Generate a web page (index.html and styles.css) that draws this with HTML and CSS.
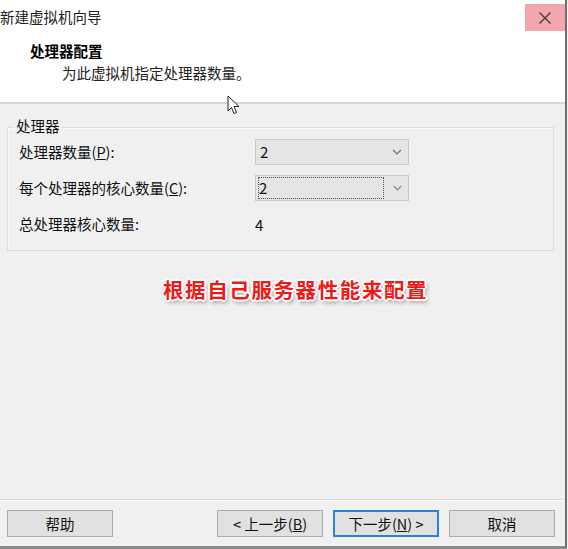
FILE: index.html
```html
<!DOCTYPE html>
<html lang="zh">
<head>
<meta charset="utf-8">
<title>新建虚拟机向导</title>
<link rel="stylesheet" href="styles.css">
</head>
<body>
<div class="window">
  <div class="header">
    <div class="titlebar">
      <span class="title">新建虚拟机向导</span>
      <div class="close">
        <svg width="14" height="14" viewBox="0 0 14 14"><path d="M1.5 1.5 L12.5 12.5 M12.5 1.5 L1.5 12.5" stroke="#3a3a3a" stroke-width="1.3" fill="none"/></svg>
      </div>
    </div>
    <div class="heading">处理器配置</div>
    <div class="subheading">为此虚拟机指定处理器数量。</div>
    <svg class="cursor" width="14" height="20" viewBox="0 0 14 20"><path d="M1 1 L1 16 L4.5 12.5 L7 18.5 L9.5 17.5 L7 11.5 L12 11.5 Z" fill="#fff" stroke="#222" stroke-width="1"/></svg>
  </div>
  <div class="body">
    <div class="group">
      <span class="legend">处理器</span>
      <div class="row">
        <span class="label">处理器数量(<u>P</u>):</span>
        <div class="combo"><span class="val">2</span><svg class="chev" width="10" height="6" viewBox="0 0 10 6"><path d="M1 1 L5 5 L9 1" stroke="#707070" stroke-width="1.2" fill="none"/></svg></div>
      </div>
      <div class="row">
        <span class="label">每个处理器的核心数量(<u>C</u>):</span>
        <div class="combo"><span class="val focus">2</span><svg class="chev" width="10" height="6" viewBox="0 0 10 6"><path d="M1 1 L5 5 L9 1" stroke="#707070" stroke-width="1.2" fill="none"/></svg></div>
      </div>
      <div class="row">
        <span class="label">总处理器核心数量:</span>
        <span class="num">4</span>
      </div>
    </div>
    <div class="note">根据自己服务器性能来配置</div>
  </div>
  <div class="footer">
    <button class="btn help">帮助</button>
    <div class="spacer"></div>
    <button class="btn">&lt; 上一步(<u>B</u>)</button>
    <button class="btn primary">下一步(<u>N</u>) &gt;</button>
    <button class="btn">取消</button>
  </div>
</div>
</body>
</html>
```
FILE: styles.css
```css
html, body {
  margin: 0;
  padding: 0;
  background: #f0f0f0;
}
body {
  width: 568px;
  height: 549px;
  overflow: hidden;
  font-family: "Noto Sans CJK SC", "Noto Sans", sans-serif;
  font-size: 14.5px;
  color: #111;
}
.window {
  width: 565px;
  height: 546px;
  border-right: 2px solid #6e6e6e;
  border-bottom: 3px solid #8a8a8a;
  display: flex;
  flex-direction: column;
  background: #f0f0f0;
  box-sizing: content-box;
}
.header {
  position: relative;
  background: #fff;
  height: 102px;
  border-bottom: 2px solid #d6d6d6;
  flex: none;
}
.titlebar {
  height: 31px;
  display: flex;
  align-items: flex-start;
  justify-content: space-between;
}
.title {
  font-size: 14.5px;
  line-height: 20px;
  margin-top: 7px;
  color: #222;
}
.close {
  width: 40px;
  height: 27px;
  margin-top: 4px;
  background: #f4a6ad;
  display: flex;
  align-items: center;
  justify-content: center;
}
.heading {
  font-weight: bold;
  padding-left: 30px;
  margin-top: 10px;
  line-height: 20px;
  color: #000;
}
.subheading {
  padding-left: 62px;
  margin-top: 2px;
  line-height: 20px;
  color: #222;
}
.cursor {
  position: absolute;
  left: 227px;
  top: 95px;
}
.body {
  flex: 1;
  padding: 23px 10px 0 7px;
}
.group {
  position: relative;
  width: 547px;
  height: 124px;
  border: 1px solid #dcdcdc;
  box-shadow: inset 1px 1px 0 #fafafa;
  box-sizing: border-box;
  padding: 11px 0 0 11px;
  display: flex;
  flex-direction: column;
  gap: 10px;
}
.legend {
  position: absolute;
  left: 6px;
  top: -12px;
  padding: 0 2px;
  background: #f0f0f0;
  line-height: 20px;
}
.row {
  display: flex;
  align-items: center;
  height: 26px;
}
.label {
  width: 236px;
  flex: none;
  line-height: 20px;
}
.combo {
  width: 154px;
  height: 26px;
  box-sizing: border-box;
  background: #e5e5e5;
  border: 1px solid #cacaca;
  display: flex;
  align-items: center;
  padding: 0 6px 0 2px;
}
.val {
  flex: 1;
  padding-left: 2px;
  font-size: 15px;
  line-height: 20px;
}
.val.focus {
  flex: none;
  width: 124px;
  height: 20px;
  border: 1px dotted #555;
  padding-left: 0;
  margin-right: 9px;
  line-height: 20px;
}
.chev {
  margin-left: auto;
}
.num {
  font-size: 15px;
}
.note {
  margin: 24px 0 0 156px;
  font-size: 20.5px;
  font-weight: bold;
  letter-spacing: 1.6px;
  color: #f01818;
  line-height: 28px;
  text-shadow:
    -1px -1px 0 #fff, 1px -1px 0 #fff, -1px 1px 0 #fff, 1px 1px 0 #fff,
    0 -2px 0 #fff, 0 2px 0 #fff, -2px 0 0 #fff, 2px 0 0 #fff,
    2px 3px 4px rgba(0,0,0,0.45);
}
.footer {
  flex: none;
  height: 47px;
  border-top: 1px solid #d9d9d9;
  box-shadow: inset 0 1px 0 #fbfbfb;
  display: flex;
  align-items: flex-start;
  padding: 10px 10px 0 7px;
  gap: 10px;
  box-sizing: border-box;
}
.spacer {
  flex: 1;
}
.btn {
  width: 106px;
  height: 27px;
  margin: 0;
  padding: 0;
  background: #e1e1e1;
  border: 1px solid #adadad;
  font-family: "Noto Sans CJK SC", "Noto Sans", sans-serif;
  font-size: 14.5px;
  color: #111;
  line-height: 20px;
}
.btn.primary {
  border: 2px solid #2b83d6;
}
```
